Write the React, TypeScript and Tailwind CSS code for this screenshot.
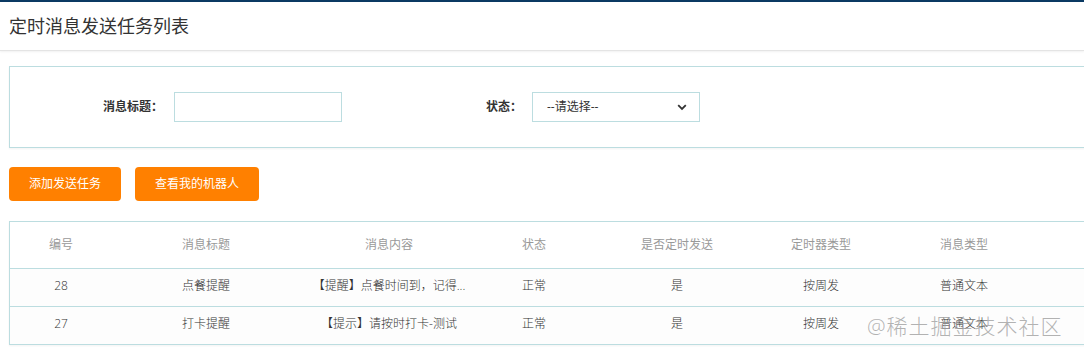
import React from 'react';

const font = { fontFamily: '"Open Sans", "Noto Sans CJK SC", sans-serif' };

const columns = [
  { label: '编号', w: 'w-[102px]' },
  { label: '消息标题', w: 'w-[188px]' },
  { label: '消息内容', w: 'w-[178px]' },
  { label: '状态', w: 'w-[112px]' },
  { label: '是否定时发送', w: 'w-[174px]' },
  { label: '定时器类型', w: 'w-[114px]' },
  { label: '消息类型', w: 'w-[172px]' },
];

const rows = [
  ['28', '点餐提醒', '【提醒】点餐时间到，记得...', '正常', '是', '按周发', '普通文本'],
  ['27', '打卡提醒', '【提示】请按时打卡-测试', '正常', '是', '按周发', '普通文本'],
];

const App = () => {
  return (
    <div className="relative h-[349px] w-[1084px] overflow-hidden bg-white" style={font}>
      {/* Header */}
      <div className="h-[2px] bg-[#0b3a63]" />
      <div className="flex h-[49px] items-center border-b border-[#e4e4e4] px-[9px] shadow-[0_1px_2px_rgba(0,0,0,0.06)]">
        <h1 className="text-[18px] text-[#333]">定时消息发送任务列表</h1>
      </div>

      {/* Filter box */}
      <div className="ml-[9px] mt-[15px] flex h-[82px] w-[1090px] items-center border border-[#bcdde0] shadow-[0_1px_2px_rgba(0,0,0,0.05)]">
        <div className="flex items-center">
          <span className="ml-[93px] w-[70px] text-[12px] font-bold text-[#333]">消息标题：</span>
          <input className="ml-[1px] h-[30px] w-[168px] border border-[#bcdde0] outline-none" />
        </div>
        <div className="ml-[144px] flex items-center">
          <span className="w-[46px] text-[12px] font-bold text-[#333]">状态：</span>
          <div className="flex h-[30px] w-[168px] items-center justify-between border border-[#bcdde0] pl-[14px] pr-[12px] text-[12px] text-[#333]">
            <span>--请选择--</span>
            <svg width="10" height="7" viewBox="0 0 10 7">
              <path d="M1.2 1.2 L5 5 L8.8 1.2" fill="none" stroke="#333" strokeWidth="1.8" />
            </svg>
          </div>
        </div>
      </div>

      {/* Buttons */}
      <div className="ml-[9px] mt-[19px] flex gap-[14px]">
        <button className="h-[34px] w-[112px] rounded-[4px] bg-[#ff8000] text-[12px] text-white">添加发送任务</button>
        <button className="h-[34px] w-[124px] rounded-[4px] bg-[#ff8000] text-[12px] text-white">查看我的机器人</button>
      </div>

      {/* Table */}
      <div className="ml-[9px] mt-[20px] w-[1100px] border border-[#bcdde0] shadow-[0_1px_2px_rgba(0,0,0,0.05)]">
        <div className="flex h-[46px] items-center text-[12px] text-[#999]">
          {columns.map((c) => (
            <div key={c.label} className={`${c.w} text-center`}>
              {c.label}
            </div>
          ))}
        </div>
        {rows.map((r) => (
          <div key={r[0]} className="flex h-[38px] items-center border-t border-[#bcdde0] bg-[#fdfdfd] pb-[3px] text-[12px] font-light text-[#333]">
            {r.map((cell, i) => (
              <div key={i} className={`${columns[i].w} text-center`}>
                {cell}
              </div>
            ))}
          </div>
        ))}
      </div>

      {/* Watermark */}
      <div className="pointer-events-none absolute left-[867px] top-[311px] text-[21px] font-light tracking-[1px] text-[#9a9a9a]/75">
        @稀土掘金技术社区
      </div>
    </div>
  );
};

export default App;
